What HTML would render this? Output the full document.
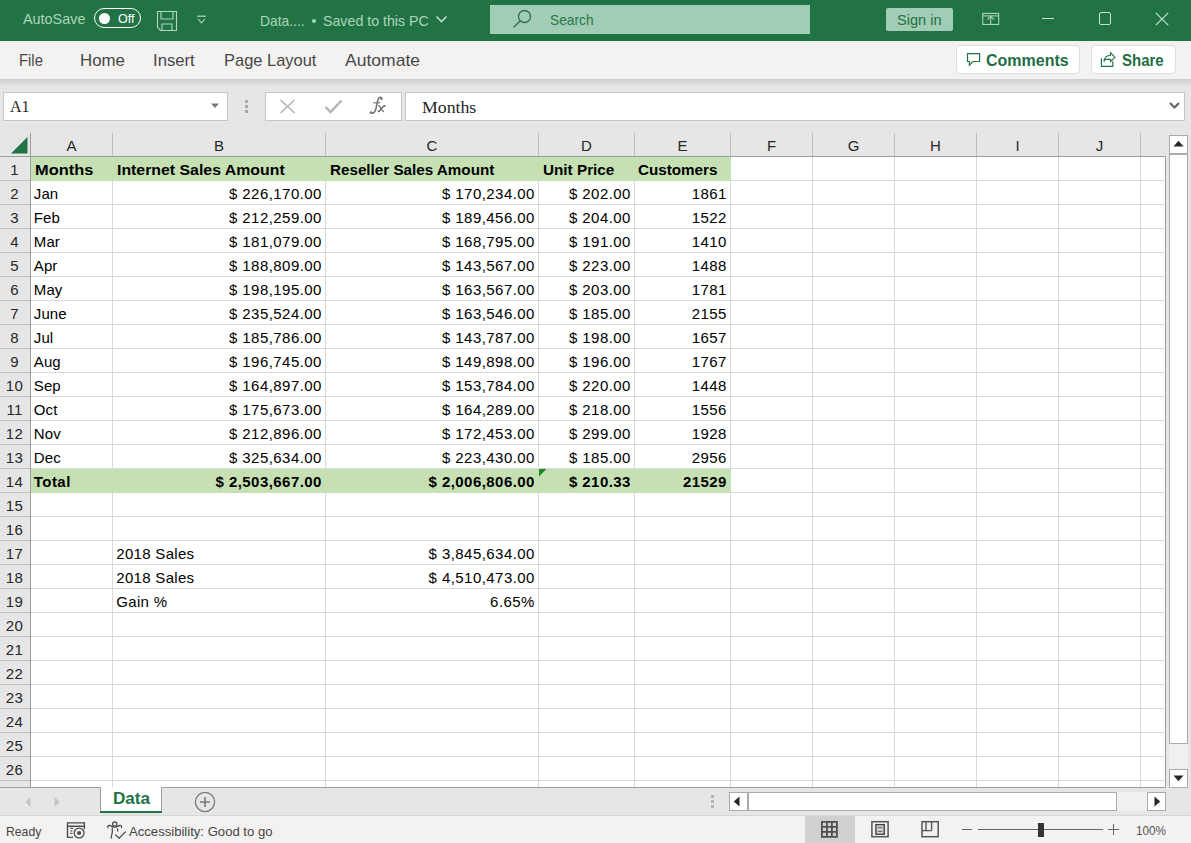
<!DOCTYPE html>
<html><head><meta charset="utf-8"><style>
html,body{margin:0;padding:0;}
body{width:1191px;height:843px;overflow:hidden;position:relative;background:#fff;font-family:"Liberation Sans",sans-serif;}
.t{position:absolute;white-space:nowrap;line-height:1;transform-origin:0 0;}
.r{position:absolute;}
svg.r{overflow:visible}
</style></head><body>
<div class="r" style="left:0px;top:0px;width:1191px;height:41px;background:#217346"></div>
<div class="t" style="left:23.20px;top:11.30px;font-size:15px;font-family:'Liberation Sans', sans-serif;font-weight:400;color:#acd4b9;transform:scaleX(0.9593);">AutoSave</div>
<div class="r" style="left:94px;top:8px;width:45px;height:18px;border:1.5px solid #ffffff;border-radius:11px;box-sizing:content-box"></div>
<div class="r" style="left:98.5px;top:12.5px;width:11px;height:11px;border-radius:50%;background:#fff"></div>
<div class="t" style="left:117.50px;top:12.00px;font-size:13px;font-family:'Liberation Sans', sans-serif;font-weight:400;color:#ffffff;transform:scaleX(0.9649);">Off</div>
<svg class="r" style="left:156px;top:10px" width="22" height="22" viewBox="0 0 22 22">
<path d="M1.5 1.5 H20.5 V20.5 H4.5 L1.5 17.5 Z" fill="none" stroke="#b6d6c1" stroke-width="1.1"/>
<path d="M5 1.5 V9 H17 V1.5" fill="none" stroke="#b6d6c1" stroke-width="1.1"/>
<path d="M6 20.5 V14 H16 V20.5" fill="none" stroke="#b6d6c1" stroke-width="1.1"/>
</svg>
<svg class="r" style="left:196px;top:14px" width="12" height="12" viewBox="0 0 12 12">
<path d="M1 2.2 H10" stroke="#c3ddcc" stroke-width="1.1"/>
<path d="M2 5 L5.5 8.8 L9 5" fill="none" stroke="#c3ddcc" stroke-width="1.1"/>
</svg>
<div class="t" style="left:259.70px;top:13.30px;font-size:15px;font-family:'Liberation Sans', sans-serif;font-weight:400;color:#acd4b9;transform:scaleX(0.9224);">Data....</div>
<div class="r" style="left:312px;top:19px;width:4px;height:4px;border-radius:50%;background:#acd4b9"></div>
<div class="t" style="left:323.20px;top:13.30px;font-size:15px;font-family:'Liberation Sans', sans-serif;font-weight:400;color:#acd4b9;transform:scaleX(0.9470);">Saved to this PC</div>
<svg class="r" style="left:435px;top:14px" width="13" height="10" viewBox="0 0 13 10">
<path d="M1.5 2.5 L6.5 7.5 L11.5 2.5" fill="none" stroke="#c3ddcc" stroke-width="1.6"/>
</svg>
<div class="r" style="left:490px;top:5px;width:320px;height:29px;background:#a0cdb3"></div>
<svg class="r" style="left:511px;top:8px" width="22" height="22" viewBox="0 0 22 22">
<circle cx="13.5" cy="8.5" r="6" fill="none" stroke="#2f6f4a" stroke-width="1.3"/>
<path d="M9.3 12.7 L2.5 19.5" stroke="#2f6f4a" stroke-width="1.3"/>
</svg>
<div class="t" style="left:550.00px;top:12.30px;font-size:15px;font-family:'Liberation Sans', sans-serif;font-weight:400;color:#2a774b;transform:scaleX(0.9174);">Search</div>
<div class="r" style="left:886px;top:8px;width:67px;height:23px;background:#a0cdb3;border-radius:2px"></div>
<div class="t" style="left:897.20px;top:12.20px;font-size:15px;font-family:'Liberation Sans', sans-serif;font-weight:400;color:#1f7344;transform:scaleX(0.9703);">Sign in</div>
<svg class="r" style="left:981px;top:12px" width="19" height="15" viewBox="0 0 19 15">
<rect x="1.75" y="1.45" width="15.9" height="11" fill="none" stroke="#acd4b9" stroke-width="1.1"/>
<path d="M1.75 3.9 H17.65" stroke="#acd4b9" stroke-width="1.1"/>
<path d="M9.7 13 V4.2 M6.4 7.6 L9.7 4.3 L13 7.6" fill="none" stroke="#acd4b9" stroke-width="1.1"/>
</svg>
<div class="r" style="left:1042px;top:18px;width:12px;height:1.2px;background:#c5e1cf"></div>
<div class="r" style="left:1098.6px;top:12.4px;width:12.8px;height:12.8px;border:1.1px solid #c5e1cf;border-radius:2px;box-sizing:border-box"></div>
<svg class="r" style="left:1155px;top:12px" width="14" height="14" viewBox="0 0 14 14">
<path d="M0.8 0.8 L13.2 13.2 M13.2 0.8 L0.8 13.2" stroke="#c5e1cf" stroke-width="1.2"/>
</svg>
<div class="r" style="left:0px;top:41px;width:1191px;height:38px;background:#f3f2f1"></div>
<div class="r" style="left:0;top:79px;width:1191px;height:8px;background:linear-gradient(#cfcfcf,#e6e6e6)"></div>
<div class="t" style="left:18.80px;top:51.61px;font-size:17px;font-family:'Liberation Sans', sans-serif;font-weight:400;color:#474747;transform:scaleX(0.8725);">File</div>
<div class="t" style="left:79.70px;top:51.61px;font-size:17px;font-family:'Liberation Sans', sans-serif;font-weight:400;color:#474747;transform:scaleX(0.9901);">Home</div>
<div class="t" style="left:153.30px;top:51.61px;font-size:17px;font-family:'Liberation Sans', sans-serif;font-weight:400;color:#474747;transform:scaleX(0.9808);">Insert</div>
<div class="t" style="left:224.20px;top:51.61px;font-size:17px;font-family:'Liberation Sans', sans-serif;font-weight:400;color:#474747;transform:scaleX(0.9679);">Page Layout</div>
<div class="t" style="left:345.40px;top:51.61px;font-size:17px;font-family:'Liberation Sans', sans-serif;font-weight:400;color:#474747;transform:scaleX(1.0307);">Automate</div>
<div class="r" style="left:956px;top:45px;width:124px;height:29px;background:#fff;border:1px solid #e1dfdd;border-radius:4px;box-sizing:border-box"></div>
<div class="r" style="left:1091px;top:45px;width:85px;height:29px;background:#fff;border:1px solid #e1dfdd;border-radius:4px;box-sizing:border-box"></div>
<svg class="r" style="left:965px;top:51px" width="17" height="17" viewBox="0 0 17 17">
<path d="M2.5 2.6 H14.6 V10.5 H7.8 L4.4 14.2 V10.5 H2.5 Z" fill="none" stroke="#217346" stroke-width="1.2" stroke-linejoin="miter"/>
</svg>
<div class="t" style="left:986.40px;top:51.61px;font-size:17px;font-family:'Liberation Sans', sans-serif;font-weight:700;color:#1f6e43;transform:scaleX(0.9403);">Comments</div>
<svg class="r" style="left:1099px;top:50px" width="18" height="18" viewBox="0 0 18 18">
<path d="M2.4 8.2 V16.4 H13.8 V11.2" fill="none" stroke="#217346" stroke-width="1.2"/>
<path d="M4.9 11.6 C5.4 7.6 8 5.4 11.5 5.3 V2.6 L15.9 7.3 L11.5 11.6 V9.4 H6.4 C5.8 9.9 5.3 10.6 4.9 11.6 Z" fill="none" stroke="#217346" stroke-width="1.1" stroke-linejoin="miter"/>
</svg>
<div class="t" style="left:1121.70px;top:51.61px;font-size:17px;font-family:'Liberation Sans', sans-serif;font-weight:700;color:#1f6e43;transform:scaleX(0.8826);">Share</div>
<div class="r" style="left:0px;top:85px;width:1191px;height:48px;background:#e6e6e6"></div>
<div class="r" style="left:3px;top:92px;width:225px;height:29px;background:#fff;border:1px solid #c6c6c6;box-sizing:border-box"></div>
<div class="t" style="left:10.00px;top:98.90px;font-size:16px;font-family:'Liberation Serif', serif;font-weight:400;color:#262626;transform:scaleX(1.0023);">A1</div>
<svg class="r" style="left:210px;top:103px" width="10" height="6" viewBox="0 0 10 6"><path d="M1 0.5 H9 L5 5 Z" fill="#7a7a7a"/></svg>
<div class="r" style="left:245px;top:100px;width:3px;height:3px;background:#a9a9a9"></div>
<div class="r" style="left:245px;top:105px;width:3px;height:3px;background:#a9a9a9"></div>
<div class="r" style="left:245px;top:110px;width:3px;height:3px;background:#a9a9a9"></div>
<div class="r" style="left:265px;top:92px;width:137px;height:29px;background:#fff;border:1px solid #c6c6c6;box-sizing:border-box"></div>
<svg class="r" style="left:279px;top:99px" width="17" height="15" viewBox="0 0 17 15"><path d="M1.5 1 L15.5 14 M15.5 1 L1.5 14" stroke="#b4b4b4" stroke-width="1.6"/></svg>
<svg class="r" style="left:324px;top:99px" width="19" height="15" viewBox="0 0 19 15"><path d="M1.5 8 L6.5 13 L17.5 1.5" fill="none" stroke="#b4b4b4" stroke-width="2.4"/></svg>
<svg class="r" style="left:365px;top:94px" width="24" height="22" viewBox="0 0 24 22">
<path d="M16.8 4.6 C16.4 3 14.4 2.6 13.4 4.6 C12.4 6.6 11.9 10.5 11 14.5 C10.3 17.6 9 19.6 6.2 19.3" fill="none" stroke="#707070" stroke-width="1.5"/>
<circle cx="16.4" cy="4.8" r="1.2" fill="#707070"/><circle cx="5.9" cy="18.6" r="1.3" fill="#707070"/>
<path d="M8.2 8.8 H15" stroke="#7a7a7a" stroke-width="1.2"/>
<path d="M13.2 11.6 C14.6 11.4 15.3 12.6 16.2 14.8 C17 16.8 17.6 17.8 19 17.4 M19.8 11.8 C19 11.6 18.6 12 13.8 17.6" fill="none" stroke="#707070" stroke-width="1.4"/>
<circle cx="13.6" cy="17.2" r="1" fill="#707070"/><circle cx="19.6" cy="12" r="1" fill="#707070"/>
</svg>
<div class="r" style="left:405px;top:92px;width:780px;height:29px;background:#fff;border:1px solid #c6c6c6;box-sizing:border-box"></div>
<div class="t" style="left:422.10px;top:99.60px;font-size:16px;font-family:'Liberation Serif', serif;font-weight:400;color:#262626;transform:scaleX(1.1084);">Months</div>
<svg class="r" style="left:1169px;top:102px" width="11" height="8" viewBox="0 0 11 8"><path d="M1 1 L5.5 5.5 L10 1" fill="none" stroke="#666" stroke-width="2.2"/></svg>
<div class="r" style="left:0px;top:133px;width:1166px;height:24px;background:#e6e6e6"></div>
<div class="r" style="left:0px;top:157px;width:30px;height:631px;background:#e6e6e6"></div>
<div class="r" style="left:31px;top:157px;width:1135px;height:630px;background:#fff"></div>
<div class="r" style="left:31px;top:157px;width:700px;height:24px;background:#c6e0b4"></div>
<div class="r" style="left:31px;top:469px;width:700px;height:24px;background:#c6e0b4"></div>
<div class="r" style="left:112px;top:157px;width:1px;height:630px;background:#d9d9d9"></div>
<div class="r" style="left:325px;top:157px;width:1px;height:630px;background:#d9d9d9"></div>
<div class="r" style="left:538px;top:157px;width:1px;height:630px;background:#d9d9d9"></div>
<div class="r" style="left:634px;top:157px;width:1px;height:630px;background:#d9d9d9"></div>
<div class="r" style="left:730px;top:157px;width:1px;height:630px;background:#d9d9d9"></div>
<div class="r" style="left:812px;top:157px;width:1px;height:630px;background:#d9d9d9"></div>
<div class="r" style="left:894px;top:157px;width:1px;height:630px;background:#d9d9d9"></div>
<div class="r" style="left:976px;top:157px;width:1px;height:630px;background:#d9d9d9"></div>
<div class="r" style="left:1058px;top:157px;width:1px;height:630px;background:#d9d9d9"></div>
<div class="r" style="left:1140px;top:157px;width:1px;height:630px;background:#d9d9d9"></div>
<div class="r" style="left:31px;top:180px;width:1135px;height:1px;background:#d9d9d9"></div>
<div class="r" style="left:31px;top:204px;width:1135px;height:1px;background:#d9d9d9"></div>
<div class="r" style="left:31px;top:228px;width:1135px;height:1px;background:#d9d9d9"></div>
<div class="r" style="left:31px;top:252px;width:1135px;height:1px;background:#d9d9d9"></div>
<div class="r" style="left:31px;top:276px;width:1135px;height:1px;background:#d9d9d9"></div>
<div class="r" style="left:31px;top:300px;width:1135px;height:1px;background:#d9d9d9"></div>
<div class="r" style="left:31px;top:324px;width:1135px;height:1px;background:#d9d9d9"></div>
<div class="r" style="left:31px;top:348px;width:1135px;height:1px;background:#d9d9d9"></div>
<div class="r" style="left:31px;top:372px;width:1135px;height:1px;background:#d9d9d9"></div>
<div class="r" style="left:31px;top:396px;width:1135px;height:1px;background:#d9d9d9"></div>
<div class="r" style="left:31px;top:420px;width:1135px;height:1px;background:#d9d9d9"></div>
<div class="r" style="left:31px;top:444px;width:1135px;height:1px;background:#d9d9d9"></div>
<div class="r" style="left:31px;top:468px;width:1135px;height:1px;background:#d9d9d9"></div>
<div class="r" style="left:31px;top:492px;width:1135px;height:1px;background:#d9d9d9"></div>
<div class="r" style="left:31px;top:516px;width:1135px;height:1px;background:#d9d9d9"></div>
<div class="r" style="left:31px;top:540px;width:1135px;height:1px;background:#d9d9d9"></div>
<div class="r" style="left:31px;top:564px;width:1135px;height:1px;background:#d9d9d9"></div>
<div class="r" style="left:31px;top:588px;width:1135px;height:1px;background:#d9d9d9"></div>
<div class="r" style="left:31px;top:612px;width:1135px;height:1px;background:#d9d9d9"></div>
<div class="r" style="left:31px;top:636px;width:1135px;height:1px;background:#d9d9d9"></div>
<div class="r" style="left:31px;top:660px;width:1135px;height:1px;background:#d9d9d9"></div>
<div class="r" style="left:31px;top:684px;width:1135px;height:1px;background:#d9d9d9"></div>
<div class="r" style="left:31px;top:708px;width:1135px;height:1px;background:#d9d9d9"></div>
<div class="r" style="left:31px;top:732px;width:1135px;height:1px;background:#d9d9d9"></div>
<div class="r" style="left:31px;top:756px;width:1135px;height:1px;background:#d9d9d9"></div>
<div class="r" style="left:31px;top:780px;width:1135px;height:1px;background:#d9d9d9"></div>
<div class="r" style="left:31px;top:157px;width:700px;height:24px;background:#c6e0b4"></div>
<div class="r" style="left:31px;top:469px;width:700px;height:24px;background:#c6e0b4"></div>
<div class="r" style="left:30px;top:133px;width:1px;height:23px;background:#bfbfbf"></div>
<div class="r" style="left:112px;top:133px;width:1px;height:23px;background:#bfbfbf"></div>
<div class="r" style="left:325px;top:133px;width:1px;height:23px;background:#bfbfbf"></div>
<div class="r" style="left:538px;top:133px;width:1px;height:23px;background:#bfbfbf"></div>
<div class="r" style="left:634px;top:133px;width:1px;height:23px;background:#bfbfbf"></div>
<div class="r" style="left:730px;top:133px;width:1px;height:23px;background:#bfbfbf"></div>
<div class="r" style="left:812px;top:133px;width:1px;height:23px;background:#bfbfbf"></div>
<div class="r" style="left:894px;top:133px;width:1px;height:23px;background:#bfbfbf"></div>
<div class="r" style="left:976px;top:133px;width:1px;height:23px;background:#bfbfbf"></div>
<div class="r" style="left:1058px;top:133px;width:1px;height:23px;background:#bfbfbf"></div>
<div class="r" style="left:1140px;top:133px;width:1px;height:23px;background:#bfbfbf"></div>
<div class="r" style="left:0px;top:156px;width:1166px;height:1px;background:#9e9e9e"></div>
<div class="r" style="left:30px;top:133px;width:1px;height:655px;background:#9e9e9e"></div>
<div class="r" style="left:0px;top:180px;width:30px;height:1px;background:#bfbfbf"></div>
<div class="r" style="left:0px;top:204px;width:30px;height:1px;background:#bfbfbf"></div>
<div class="r" style="left:0px;top:228px;width:30px;height:1px;background:#bfbfbf"></div>
<div class="r" style="left:0px;top:252px;width:30px;height:1px;background:#bfbfbf"></div>
<div class="r" style="left:0px;top:276px;width:30px;height:1px;background:#bfbfbf"></div>
<div class="r" style="left:0px;top:300px;width:30px;height:1px;background:#bfbfbf"></div>
<div class="r" style="left:0px;top:324px;width:30px;height:1px;background:#bfbfbf"></div>
<div class="r" style="left:0px;top:348px;width:30px;height:1px;background:#bfbfbf"></div>
<div class="r" style="left:0px;top:372px;width:30px;height:1px;background:#bfbfbf"></div>
<div class="r" style="left:0px;top:396px;width:30px;height:1px;background:#bfbfbf"></div>
<div class="r" style="left:0px;top:420px;width:30px;height:1px;background:#bfbfbf"></div>
<div class="r" style="left:0px;top:444px;width:30px;height:1px;background:#bfbfbf"></div>
<div class="r" style="left:0px;top:468px;width:30px;height:1px;background:#bfbfbf"></div>
<div class="r" style="left:0px;top:492px;width:30px;height:1px;background:#bfbfbf"></div>
<div class="r" style="left:0px;top:516px;width:30px;height:1px;background:#bfbfbf"></div>
<div class="r" style="left:0px;top:540px;width:30px;height:1px;background:#bfbfbf"></div>
<div class="r" style="left:0px;top:564px;width:30px;height:1px;background:#bfbfbf"></div>
<div class="r" style="left:0px;top:588px;width:30px;height:1px;background:#bfbfbf"></div>
<div class="r" style="left:0px;top:612px;width:30px;height:1px;background:#bfbfbf"></div>
<div class="r" style="left:0px;top:636px;width:30px;height:1px;background:#bfbfbf"></div>
<div class="r" style="left:0px;top:660px;width:30px;height:1px;background:#bfbfbf"></div>
<div class="r" style="left:0px;top:684px;width:30px;height:1px;background:#bfbfbf"></div>
<div class="r" style="left:0px;top:708px;width:30px;height:1px;background:#bfbfbf"></div>
<div class="r" style="left:0px;top:732px;width:30px;height:1px;background:#bfbfbf"></div>
<div class="r" style="left:0px;top:756px;width:30px;height:1px;background:#bfbfbf"></div>
<div class="r" style="left:0px;top:780px;width:30px;height:1px;background:#bfbfbf"></div>
<div class="r" style="left:1165px;top:157px;width:1px;height:631px;background:#9e9e9e"></div>
<div class="r" style="left:0px;top:787px;width:1166px;height:1px;background:#9e9e9e"></div>
<svg class="r" style="left:10px;top:136px" width="19" height="19" viewBox="0 0 19 19"><path d="M17.5 1 V17.5 H1 Z" fill="#217346"/></svg>
<div class="t" style="left:66.50px;top:138.30px;font-size:15px;font-family:'Liberation Sans', sans-serif;font-weight:400;color:#262626;">A</div>
<div class="t" style="left:214.00px;top:138.30px;font-size:15px;font-family:'Liberation Sans', sans-serif;font-weight:400;color:#262626;">B</div>
<div class="t" style="left:426.58px;top:138.30px;font-size:15px;font-family:'Liberation Sans', sans-serif;font-weight:400;color:#262626;">C</div>
<div class="t" style="left:581.08px;top:138.30px;font-size:15px;font-family:'Liberation Sans', sans-serif;font-weight:400;color:#262626;">D</div>
<div class="t" style="left:677.50px;top:138.30px;font-size:15px;font-family:'Liberation Sans', sans-serif;font-weight:400;color:#262626;">E</div>
<div class="t" style="left:766.92px;top:138.30px;font-size:15px;font-family:'Liberation Sans', sans-serif;font-weight:400;color:#262626;">F</div>
<div class="t" style="left:847.67px;top:138.30px;font-size:15px;font-family:'Liberation Sans', sans-serif;font-weight:400;color:#262626;">G</div>
<div class="t" style="left:930.08px;top:138.30px;font-size:15px;font-family:'Liberation Sans', sans-serif;font-weight:400;color:#262626;">H</div>
<div class="t" style="left:1015.42px;top:138.30px;font-size:15px;font-family:'Liberation Sans', sans-serif;font-weight:400;color:#262626;">I</div>
<div class="t" style="left:1095.75px;top:138.30px;font-size:15px;font-family:'Liberation Sans', sans-serif;font-weight:400;color:#262626;">J</div>
<div class="t" style="left:10.18px;top:162.30px;font-size:15px;font-family:'Liberation Sans', sans-serif;font-weight:400;color:#262626;letter-spacing:0.3px;">1</div>
<div class="t" style="left:10.18px;top:186.30px;font-size:15px;font-family:'Liberation Sans', sans-serif;font-weight:400;color:#262626;letter-spacing:0.3px;">2</div>
<div class="t" style="left:10.18px;top:210.30px;font-size:15px;font-family:'Liberation Sans', sans-serif;font-weight:400;color:#262626;letter-spacing:0.3px;">3</div>
<div class="t" style="left:10.18px;top:234.30px;font-size:15px;font-family:'Liberation Sans', sans-serif;font-weight:400;color:#262626;letter-spacing:0.3px;">4</div>
<div class="t" style="left:10.18px;top:258.30px;font-size:15px;font-family:'Liberation Sans', sans-serif;font-weight:400;color:#262626;letter-spacing:0.3px;">5</div>
<div class="t" style="left:10.18px;top:282.30px;font-size:15px;font-family:'Liberation Sans', sans-serif;font-weight:400;color:#262626;letter-spacing:0.3px;">6</div>
<div class="t" style="left:10.18px;top:306.30px;font-size:15px;font-family:'Liberation Sans', sans-serif;font-weight:400;color:#262626;letter-spacing:0.3px;">7</div>
<div class="t" style="left:10.18px;top:330.30px;font-size:15px;font-family:'Liberation Sans', sans-serif;font-weight:400;color:#262626;letter-spacing:0.3px;">8</div>
<div class="t" style="left:10.18px;top:354.30px;font-size:15px;font-family:'Liberation Sans', sans-serif;font-weight:400;color:#262626;letter-spacing:0.3px;">9</div>
<div class="t" style="left:5.86px;top:378.30px;font-size:15px;font-family:'Liberation Sans', sans-serif;font-weight:400;color:#262626;letter-spacing:0.3px;">10</div>
<div class="t" style="left:6.41px;top:402.30px;font-size:15px;font-family:'Liberation Sans', sans-serif;font-weight:400;color:#262626;letter-spacing:0.3px;">11</div>
<div class="t" style="left:5.86px;top:426.30px;font-size:15px;font-family:'Liberation Sans', sans-serif;font-weight:400;color:#262626;letter-spacing:0.3px;">12</div>
<div class="t" style="left:5.86px;top:450.30px;font-size:15px;font-family:'Liberation Sans', sans-serif;font-weight:400;color:#262626;letter-spacing:0.3px;">13</div>
<div class="t" style="left:5.86px;top:474.30px;font-size:15px;font-family:'Liberation Sans', sans-serif;font-weight:400;color:#262626;letter-spacing:0.3px;">14</div>
<div class="t" style="left:5.86px;top:498.30px;font-size:15px;font-family:'Liberation Sans', sans-serif;font-weight:400;color:#262626;letter-spacing:0.3px;">15</div>
<div class="t" style="left:5.86px;top:522.30px;font-size:15px;font-family:'Liberation Sans', sans-serif;font-weight:400;color:#262626;letter-spacing:0.3px;">16</div>
<div class="t" style="left:5.86px;top:546.30px;font-size:15px;font-family:'Liberation Sans', sans-serif;font-weight:400;color:#262626;letter-spacing:0.3px;">17</div>
<div class="t" style="left:5.86px;top:570.30px;font-size:15px;font-family:'Liberation Sans', sans-serif;font-weight:400;color:#262626;letter-spacing:0.3px;">18</div>
<div class="t" style="left:5.86px;top:594.30px;font-size:15px;font-family:'Liberation Sans', sans-serif;font-weight:400;color:#262626;letter-spacing:0.3px;">19</div>
<div class="t" style="left:5.86px;top:618.30px;font-size:15px;font-family:'Liberation Sans', sans-serif;font-weight:400;color:#262626;letter-spacing:0.3px;">20</div>
<div class="t" style="left:5.86px;top:642.30px;font-size:15px;font-family:'Liberation Sans', sans-serif;font-weight:400;color:#262626;letter-spacing:0.3px;">21</div>
<div class="t" style="left:5.86px;top:666.30px;font-size:15px;font-family:'Liberation Sans', sans-serif;font-weight:400;color:#262626;letter-spacing:0.3px;">22</div>
<div class="t" style="left:5.86px;top:690.30px;font-size:15px;font-family:'Liberation Sans', sans-serif;font-weight:400;color:#262626;letter-spacing:0.3px;">23</div>
<div class="t" style="left:5.86px;top:714.30px;font-size:15px;font-family:'Liberation Sans', sans-serif;font-weight:400;color:#262626;letter-spacing:0.3px;">24</div>
<div class="t" style="left:5.86px;top:738.30px;font-size:15px;font-family:'Liberation Sans', sans-serif;font-weight:400;color:#262626;letter-spacing:0.3px;">25</div>
<div class="t" style="left:5.86px;top:762.30px;font-size:15px;font-family:'Liberation Sans', sans-serif;font-weight:400;color:#262626;letter-spacing:0.3px;">26</div>
<div class="t" style="left:34.70px;top:161.90px;font-size:15px;font-family:'Liberation Sans', sans-serif;font-weight:700;color:#000;transform:scaleX(1.0938);">Months</div>
<div class="t" style="left:116.60px;top:161.90px;font-size:15px;font-family:'Liberation Sans', sans-serif;font-weight:700;color:#000;transform:scaleX(1.0570);">Internet Sales Amount</div>
<div class="t" style="left:329.50px;top:161.90px;font-size:15px;font-family:'Liberation Sans', sans-serif;font-weight:700;color:#000;transform:scaleX(1.0142);">Reseller Sales Amount</div>
<div class="t" style="left:542.90px;top:161.90px;font-size:15px;font-family:'Liberation Sans', sans-serif;font-weight:700;color:#000;transform:scaleX(1.0186);">Unit Price</div>
<div class="t" style="left:638.40px;top:161.90px;font-size:15px;font-family:'Liberation Sans', sans-serif;font-weight:700;color:#000;transform:scaleX(1.0134);">Customers</div>
<div class="t" style="left:33.80px;top:185.90px;font-size:15px;font-family:'Liberation Sans', sans-serif;font-weight:400;color:#000;letter-spacing:0.1px;">Jan</div>
<div class="t" style="left:228.92px;top:185.90px;font-size:15px;font-family:'Liberation Sans', sans-serif;font-weight:400;color:#000;letter-spacing:0.45px;">$ 226,170.00</div>
<div class="t" style="left:441.92px;top:185.90px;font-size:15px;font-family:'Liberation Sans', sans-serif;font-weight:400;color:#000;letter-spacing:0.45px;">$ 170,234.00</div>
<div class="t" style="left:568.91px;top:185.90px;font-size:15px;font-family:'Liberation Sans', sans-serif;font-weight:400;color:#000;letter-spacing:0.45px;">$ 202.00</div>
<div class="t" style="left:691.73px;top:185.90px;font-size:15px;font-family:'Liberation Sans', sans-serif;font-weight:400;color:#000;letter-spacing:0.45px;">1861</div>
<div class="t" style="left:33.80px;top:209.90px;font-size:15px;font-family:'Liberation Sans', sans-serif;font-weight:400;color:#000;letter-spacing:0.1px;">Feb</div>
<div class="t" style="left:228.92px;top:209.90px;font-size:15px;font-family:'Liberation Sans', sans-serif;font-weight:400;color:#000;letter-spacing:0.45px;">$ 212,259.00</div>
<div class="t" style="left:441.92px;top:209.90px;font-size:15px;font-family:'Liberation Sans', sans-serif;font-weight:400;color:#000;letter-spacing:0.45px;">$ 189,456.00</div>
<div class="t" style="left:568.91px;top:209.90px;font-size:15px;font-family:'Liberation Sans', sans-serif;font-weight:400;color:#000;letter-spacing:0.45px;">$ 204.00</div>
<div class="t" style="left:691.73px;top:209.90px;font-size:15px;font-family:'Liberation Sans', sans-serif;font-weight:400;color:#000;letter-spacing:0.45px;">1522</div>
<div class="t" style="left:33.80px;top:233.90px;font-size:15px;font-family:'Liberation Sans', sans-serif;font-weight:400;color:#000;letter-spacing:0.1px;">Mar</div>
<div class="t" style="left:228.92px;top:233.90px;font-size:15px;font-family:'Liberation Sans', sans-serif;font-weight:400;color:#000;letter-spacing:0.45px;">$ 181,079.00</div>
<div class="t" style="left:441.92px;top:233.90px;font-size:15px;font-family:'Liberation Sans', sans-serif;font-weight:400;color:#000;letter-spacing:0.45px;">$ 168,795.00</div>
<div class="t" style="left:568.91px;top:233.90px;font-size:15px;font-family:'Liberation Sans', sans-serif;font-weight:400;color:#000;letter-spacing:0.45px;">$ 191.00</div>
<div class="t" style="left:691.73px;top:233.90px;font-size:15px;font-family:'Liberation Sans', sans-serif;font-weight:400;color:#000;letter-spacing:0.45px;">1410</div>
<div class="t" style="left:33.80px;top:257.90px;font-size:15px;font-family:'Liberation Sans', sans-serif;font-weight:400;color:#000;letter-spacing:0.1px;">Apr</div>
<div class="t" style="left:228.92px;top:257.90px;font-size:15px;font-family:'Liberation Sans', sans-serif;font-weight:400;color:#000;letter-spacing:0.45px;">$ 188,809.00</div>
<div class="t" style="left:441.92px;top:257.90px;font-size:15px;font-family:'Liberation Sans', sans-serif;font-weight:400;color:#000;letter-spacing:0.45px;">$ 143,567.00</div>
<div class="t" style="left:568.91px;top:257.90px;font-size:15px;font-family:'Liberation Sans', sans-serif;font-weight:400;color:#000;letter-spacing:0.45px;">$ 223.00</div>
<div class="t" style="left:691.73px;top:257.90px;font-size:15px;font-family:'Liberation Sans', sans-serif;font-weight:400;color:#000;letter-spacing:0.45px;">1488</div>
<div class="t" style="left:33.80px;top:281.90px;font-size:15px;font-family:'Liberation Sans', sans-serif;font-weight:400;color:#000;letter-spacing:0.1px;">May</div>
<div class="t" style="left:228.92px;top:281.90px;font-size:15px;font-family:'Liberation Sans', sans-serif;font-weight:400;color:#000;letter-spacing:0.45px;">$ 198,195.00</div>
<div class="t" style="left:441.92px;top:281.90px;font-size:15px;font-family:'Liberation Sans', sans-serif;font-weight:400;color:#000;letter-spacing:0.45px;">$ 163,567.00</div>
<div class="t" style="left:568.91px;top:281.90px;font-size:15px;font-family:'Liberation Sans', sans-serif;font-weight:400;color:#000;letter-spacing:0.45px;">$ 203.00</div>
<div class="t" style="left:691.73px;top:281.90px;font-size:15px;font-family:'Liberation Sans', sans-serif;font-weight:400;color:#000;letter-spacing:0.45px;">1781</div>
<div class="t" style="left:33.80px;top:305.90px;font-size:15px;font-family:'Liberation Sans', sans-serif;font-weight:400;color:#000;letter-spacing:0.1px;">June</div>
<div class="t" style="left:228.92px;top:305.90px;font-size:15px;font-family:'Liberation Sans', sans-serif;font-weight:400;color:#000;letter-spacing:0.45px;">$ 235,524.00</div>
<div class="t" style="left:441.92px;top:305.90px;font-size:15px;font-family:'Liberation Sans', sans-serif;font-weight:400;color:#000;letter-spacing:0.45px;">$ 163,546.00</div>
<div class="t" style="left:568.91px;top:305.90px;font-size:15px;font-family:'Liberation Sans', sans-serif;font-weight:400;color:#000;letter-spacing:0.45px;">$ 185.00</div>
<div class="t" style="left:691.73px;top:305.90px;font-size:15px;font-family:'Liberation Sans', sans-serif;font-weight:400;color:#000;letter-spacing:0.45px;">2155</div>
<div class="t" style="left:33.80px;top:329.90px;font-size:15px;font-family:'Liberation Sans', sans-serif;font-weight:400;color:#000;letter-spacing:0.1px;">Jul</div>
<div class="t" style="left:228.92px;top:329.90px;font-size:15px;font-family:'Liberation Sans', sans-serif;font-weight:400;color:#000;letter-spacing:0.45px;">$ 185,786.00</div>
<div class="t" style="left:441.92px;top:329.90px;font-size:15px;font-family:'Liberation Sans', sans-serif;font-weight:400;color:#000;letter-spacing:0.45px;">$ 143,787.00</div>
<div class="t" style="left:568.91px;top:329.90px;font-size:15px;font-family:'Liberation Sans', sans-serif;font-weight:400;color:#000;letter-spacing:0.45px;">$ 198.00</div>
<div class="t" style="left:691.73px;top:329.90px;font-size:15px;font-family:'Liberation Sans', sans-serif;font-weight:400;color:#000;letter-spacing:0.45px;">1657</div>
<div class="t" style="left:33.80px;top:353.90px;font-size:15px;font-family:'Liberation Sans', sans-serif;font-weight:400;color:#000;letter-spacing:0.1px;">Aug</div>
<div class="t" style="left:228.92px;top:353.90px;font-size:15px;font-family:'Liberation Sans', sans-serif;font-weight:400;color:#000;letter-spacing:0.45px;">$ 196,745.00</div>
<div class="t" style="left:441.92px;top:353.90px;font-size:15px;font-family:'Liberation Sans', sans-serif;font-weight:400;color:#000;letter-spacing:0.45px;">$ 149,898.00</div>
<div class="t" style="left:568.91px;top:353.90px;font-size:15px;font-family:'Liberation Sans', sans-serif;font-weight:400;color:#000;letter-spacing:0.45px;">$ 196.00</div>
<div class="t" style="left:691.73px;top:353.90px;font-size:15px;font-family:'Liberation Sans', sans-serif;font-weight:400;color:#000;letter-spacing:0.45px;">1767</div>
<div class="t" style="left:33.80px;top:377.90px;font-size:15px;font-family:'Liberation Sans', sans-serif;font-weight:400;color:#000;letter-spacing:0.1px;">Sep</div>
<div class="t" style="left:228.92px;top:377.90px;font-size:15px;font-family:'Liberation Sans', sans-serif;font-weight:400;color:#000;letter-spacing:0.45px;">$ 164,897.00</div>
<div class="t" style="left:441.92px;top:377.90px;font-size:15px;font-family:'Liberation Sans', sans-serif;font-weight:400;color:#000;letter-spacing:0.45px;">$ 153,784.00</div>
<div class="t" style="left:568.91px;top:377.90px;font-size:15px;font-family:'Liberation Sans', sans-serif;font-weight:400;color:#000;letter-spacing:0.45px;">$ 220.00</div>
<div class="t" style="left:691.73px;top:377.90px;font-size:15px;font-family:'Liberation Sans', sans-serif;font-weight:400;color:#000;letter-spacing:0.45px;">1448</div>
<div class="t" style="left:33.80px;top:401.90px;font-size:15px;font-family:'Liberation Sans', sans-serif;font-weight:400;color:#000;letter-spacing:0.1px;">Oct</div>
<div class="t" style="left:228.92px;top:401.90px;font-size:15px;font-family:'Liberation Sans', sans-serif;font-weight:400;color:#000;letter-spacing:0.45px;">$ 175,673.00</div>
<div class="t" style="left:441.92px;top:401.90px;font-size:15px;font-family:'Liberation Sans', sans-serif;font-weight:400;color:#000;letter-spacing:0.45px;">$ 164,289.00</div>
<div class="t" style="left:568.91px;top:401.90px;font-size:15px;font-family:'Liberation Sans', sans-serif;font-weight:400;color:#000;letter-spacing:0.45px;">$ 218.00</div>
<div class="t" style="left:691.73px;top:401.90px;font-size:15px;font-family:'Liberation Sans', sans-serif;font-weight:400;color:#000;letter-spacing:0.45px;">1556</div>
<div class="t" style="left:33.80px;top:425.90px;font-size:15px;font-family:'Liberation Sans', sans-serif;font-weight:400;color:#000;letter-spacing:0.1px;">Nov</div>
<div class="t" style="left:228.92px;top:425.90px;font-size:15px;font-family:'Liberation Sans', sans-serif;font-weight:400;color:#000;letter-spacing:0.45px;">$ 212,896.00</div>
<div class="t" style="left:441.92px;top:425.90px;font-size:15px;font-family:'Liberation Sans', sans-serif;font-weight:400;color:#000;letter-spacing:0.45px;">$ 172,453.00</div>
<div class="t" style="left:568.91px;top:425.90px;font-size:15px;font-family:'Liberation Sans', sans-serif;font-weight:400;color:#000;letter-spacing:0.45px;">$ 299.00</div>
<div class="t" style="left:691.73px;top:425.90px;font-size:15px;font-family:'Liberation Sans', sans-serif;font-weight:400;color:#000;letter-spacing:0.45px;">1928</div>
<div class="t" style="left:33.80px;top:449.90px;font-size:15px;font-family:'Liberation Sans', sans-serif;font-weight:400;color:#000;letter-spacing:0.1px;">Dec</div>
<div class="t" style="left:228.92px;top:449.90px;font-size:15px;font-family:'Liberation Sans', sans-serif;font-weight:400;color:#000;letter-spacing:0.45px;">$ 325,634.00</div>
<div class="t" style="left:441.92px;top:449.90px;font-size:15px;font-family:'Liberation Sans', sans-serif;font-weight:400;color:#000;letter-spacing:0.45px;">$ 223,430.00</div>
<div class="t" style="left:568.91px;top:449.90px;font-size:15px;font-family:'Liberation Sans', sans-serif;font-weight:400;color:#000;letter-spacing:0.45px;">$ 185.00</div>
<div class="t" style="left:691.73px;top:449.90px;font-size:15px;font-family:'Liberation Sans', sans-serif;font-weight:400;color:#000;letter-spacing:0.45px;">2956</div>
<div class="t" style="left:33.80px;top:473.90px;font-size:15px;font-family:'Liberation Sans', sans-serif;font-weight:700;color:#000;letter-spacing:0.45px;">Total</div>
<div class="t" style="left:215.51px;top:473.90px;font-size:15px;font-family:'Liberation Sans', sans-serif;font-weight:700;color:#000;letter-spacing:0.45px;">$ 2,503,667.00</div>
<div class="t" style="left:428.51px;top:473.90px;font-size:15px;font-family:'Liberation Sans', sans-serif;font-weight:700;color:#000;letter-spacing:0.45px;">$ 2,006,806.00</div>
<div class="t" style="left:568.91px;top:473.90px;font-size:15px;font-family:'Liberation Sans', sans-serif;font-weight:700;color:#000;letter-spacing:0.45px;">$ 210.33</div>
<div class="t" style="left:682.94px;top:473.90px;font-size:15px;font-family:'Liberation Sans', sans-serif;font-weight:700;color:#000;letter-spacing:0.45px;">21529</div>
<svg class="r" style="left:539px;top:469px" width="8" height="8" viewBox="0 0 8 8"><path d="M0 0 H7.5 L0 7.5 Z" fill="#1a8a1a"/></svg>
<div class="t" style="left:116.30px;top:545.90px;font-size:15px;font-family:'Liberation Sans', sans-serif;font-weight:400;color:#000;letter-spacing:0.3px;">2018 Sales</div>
<div class="t" style="left:428.51px;top:545.90px;font-size:15px;font-family:'Liberation Sans', sans-serif;font-weight:400;color:#000;letter-spacing:0.45px;">$ 3,845,634.00</div>
<div class="t" style="left:116.30px;top:569.90px;font-size:15px;font-family:'Liberation Sans', sans-serif;font-weight:400;color:#000;letter-spacing:0.3px;">2018 Sales</div>
<div class="t" style="left:428.51px;top:569.90px;font-size:15px;font-family:'Liberation Sans', sans-serif;font-weight:400;color:#000;letter-spacing:0.45px;">$ 4,510,473.00</div>
<div class="t" style="left:116.30px;top:593.90px;font-size:15px;font-family:'Liberation Sans', sans-serif;font-weight:400;color:#000;letter-spacing:0.3px;">Gain %</div>
<div class="t" style="left:490.12px;top:593.90px;font-size:15px;font-family:'Liberation Sans', sans-serif;font-weight:400;color:#000;letter-spacing:0.45px;">6.65%</div>
<div class="r" style="left:1166px;top:133px;width:25px;height:655px;background:#e6e6e6"></div>
<div class="r" style="left:1169px;top:135px;width:19px;height:19px;background:#fff;border:1px solid #ababab;box-sizing:border-box"></div>
<svg class="r" style="left:1173px;top:140px" width="11" height="7" viewBox="0 0 11 7"><path d="M0.5 6.5 L5.5 0.8 L10.5 6.5 Z" fill="#262626"/></svg>
<div class="r" style="left:1169px;top:154px;width:19px;height:590px;background:#fff;border:1px solid #ababab;box-sizing:border-box"></div>
<div class="r" style="left:1169px;top:744px;width:19px;height:25px;background:#f0f0f0"></div>
<div class="r" style="left:1169px;top:769px;width:19px;height:19px;background:#fff;border:1px solid #ababab;box-sizing:border-box"></div>
<svg class="r" style="left:1173px;top:775px" width="11" height="7" viewBox="0 0 11 7"><path d="M0.5 0.5 L5.5 6.2 L10.5 0.5 Z" fill="#262626"/></svg>
<div class="r" style="left:0px;top:788px;width:1191px;height:28px;background:#e6e6e6"></div>
<div class="r" style="left:0px;top:787px;width:1166px;height:1px;background:#9e9e9e"></div>
<svg class="r" style="left:23.5px;top:795.5px" width="8" height="12" viewBox="0 0 8 12"><path d="M6.5 1 L1.5 6 L6.5 11 Z" fill="#c4c4c4"/></svg>
<svg class="r" style="left:52.5px;top:795.5px" width="8" height="12" viewBox="0 0 8 12"><path d="M1.5 1 L6.5 6 L1.5 11 Z" fill="#c4c4c4"/></svg>
<div class="r" style="left:100px;top:787px;width:62px;height:26px;background:#fff;border-left:1px solid #9e9e9e;border-right:1px solid #9e9e9e;box-sizing:border-box"></div>
<div class="r" style="left:100px;top:811px;width:62px;height:2px;background:#217346"></div>
<div class="t" style="left:112.90px;top:790.86px;font-size:16px;font-family:'Liberation Sans', sans-serif;font-weight:700;color:#217346;transform:scaleX(1.0669);">Data</div>
<svg class="r" style="left:194px;top:791px" width="22" height="22" viewBox="0 0 22 22"><circle cx="11" cy="11" r="9.6" fill="none" stroke="#7a7a7a" stroke-width="1.3"/><path d="M11 6 V16 M6 11 H16" stroke="#7a7a7a" stroke-width="1.6"/></svg>
<div class="r" style="left:711px;top:795px;width:3px;height:3px;background:#b4b4b4"></div>
<div class="r" style="left:711px;top:800px;width:3px;height:3px;background:#b4b4b4"></div>
<div class="r" style="left:711px;top:805px;width:3px;height:3px;background:#b4b4b4"></div>
<div class="r" style="left:729px;top:792px;width:437px;height:19px;background:#f0f0f0"></div>
<div class="r" style="left:729px;top:792px;width:19px;height:19px;background:#fff;border:1px solid #ababab;box-sizing:border-box"></div>
<svg class="r" style="left:733px;top:796px" width="7" height="11" viewBox="0 0 7 11"><path d="M6.5 0.5 L0.8 5.5 L6.5 10.5 Z" fill="#262626"/></svg>
<div class="r" style="left:748px;top:792px;width:369px;height:19px;background:#fff;border:1px solid #ababab;box-sizing:border-box"></div>
<div class="r" style="left:1147px;top:792px;width:19px;height:19px;background:#fff;border:1px solid #ababab;box-sizing:border-box"></div>
<svg class="r" style="left:1154px;top:796px" width="7" height="11" viewBox="0 0 7 11"><path d="M0.5 0.5 L6.2 5.5 L0.5 10.5 Z" fill="#262626"/></svg>
<div class="r" style="left:0px;top:815px;width:1191px;height:1px;background:#d6d6d6"></div>
<div class="r" style="left:0px;top:816px;width:1191px;height:27px;background:#f3f2f1"></div>
<div class="t" style="left:6.30px;top:824.60px;font-size:13px;font-family:'Liberation Sans', sans-serif;font-weight:400;color:#444;transform:scaleX(0.9394);">Ready</div>
<svg class="r" style="left:66px;top:821px" width="20" height="18" viewBox="0 0 20 18">
<path d="M1.3 1.9 H18.7 M1.3 5.2 H18.7" stroke="#4d4d4d" stroke-width="1.4"/>
<path d="M1.5 1.2 V16.4 H7" fill="none" stroke="#4d4d4d" stroke-width="1.4"/>
<path d="M18.4 1.2 V8.2" stroke="#4d4d4d" stroke-width="1.3"/>
<path d="M4.3 7.4 H7.2 M4.3 9.9 H6.4 M4.3 12.4 H6.4" stroke="#555" stroke-width="1.1"/>
<circle cx="13.1" cy="12" r="4.9" fill="none" stroke="#4d4d4d" stroke-width="1.3"/>
<circle cx="13.1" cy="12" r="2.1" fill="#4d4d4d"/>
</svg>
<svg class="r" style="left:104px;top:819px" width="24" height="22" viewBox="0 0 24 22">
<circle cx="10.7" cy="4.9" r="2.1" fill="none" stroke="#444" stroke-width="1.2"/>
<path d="M4.2 9 C3 7.6 4.3 5.6 6.3 6.6 C7.8 7.4 9.2 8.1 10.7 8.1 C12.2 8.1 13.6 7.4 15.1 6.6 C17.1 5.6 18.4 7.6 17.2 9" fill="none" stroke="#444" stroke-width="1.2"/>
<path d="M8.2 8.6 C8.6 11.2 8.4 14 7.6 16.4 C7.1 17.9 6.6 18.8 8 19.2" fill="none" stroke="#444" stroke-width="1.2"/>
<path d="M13.6 9.6 V12.6" stroke="#444" stroke-width="1.2"/>
<path d="M11.4 15.6 L15.1 19.1 L21.6 12.6" fill="none" stroke="#444" stroke-width="1.3"/>
</svg>
<div class="t" style="left:128.50px;top:824.60px;font-size:13px;font-family:'Liberation Sans', sans-serif;font-weight:400;color:#444;transform:scaleX(1.0081);">Accessibility: Good to go</div>
<div class="r" style="left:805px;top:816px;width:50px;height:27px;background:#d2d0ce"></div>
<svg class="r" style="left:820px;top:820px" width="19" height="19" viewBox="0 0 19 19">
<path d="M1.9 1 V17.6 M6.9 1 V17.6 M11.9 1 V17.6 M16.9 1 V17.6 M1 1.9 H17.8 M1 6.9 H17.8 M1 11.9 H17.8 M1 16.9 H17.8" stroke="#505050" stroke-width="1.8"/>
</svg>
<svg class="r" style="left:870px;top:820px" width="20" height="19" viewBox="0 0 20 19">
<rect x="1.9" y="1.7" width="16.2" height="15" fill="none" stroke="#555" stroke-width="1.5"/>
<rect x="5.9" y="4.7" width="8.4" height="9.5" fill="#d8d8d8" stroke="#4a4a4a" stroke-width="1.5"/>
<path d="M7.6 7.8 H12.6 M7.6 11.2 H12.6" stroke="#555" stroke-width="1.1"/>
</svg>
<svg class="r" style="left:920px;top:820px" width="20" height="19" viewBox="0 0 20 19">
<rect x="2" y="1.7" width="16.2" height="15" fill="none" stroke="#555" stroke-width="1.5"/>
<path d="M6 1.7 V10.6 M11.6 1.7 V10.6 M2 10.6 H11.6" fill="none" stroke="#555" stroke-width="1.4"/>
</svg>
<div class="r" style="left:962px;top:829px;width:10px;height:1px;background:#666"></div>
<div class="r" style="left:978px;top:829px;width:125px;height:1px;background:#666"></div>
<div class="r" style="left:1038px;top:823px;width:6px;height:14px;background:#333"></div>
<div class="r" style="left:1108px;top:829px;width:11px;height:1px;background:#666"></div>
<div class="r" style="left:1113px;top:824px;width:1px;height:11px;background:#666"></div>
<div class="t" style="left:1136.00px;top:823.80px;font-size:13px;font-family:'Liberation Sans', sans-serif;font-weight:400;color:#555;transform:scaleX(0.9023);">100%</div>
</body></html>
